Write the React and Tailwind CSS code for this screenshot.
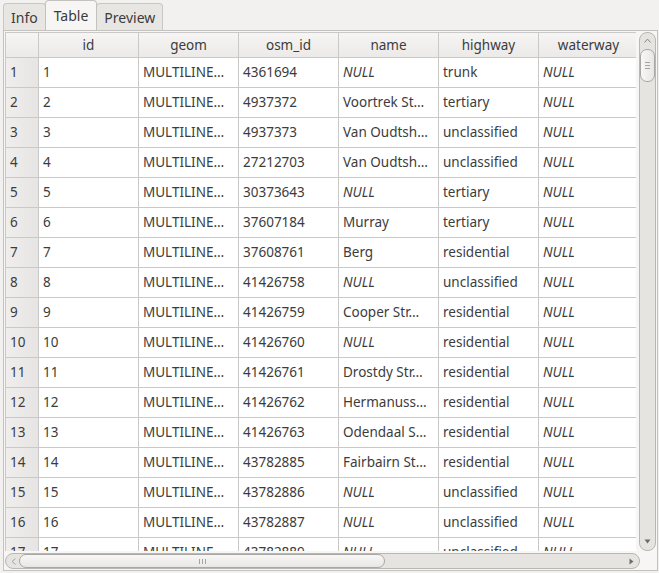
import React from 'react'

const rows = [
  ['1', '4361694', null, 'trunk'],
  ['2', '4937372', 'Voortrek St…', 'tertiary'],
  ['3', '4937373', 'Van Oudtsh…', 'unclassified'],
  ['4', '27212703', 'Van Oudtsh…', 'unclassified'],
  ['5', '30373643', null, 'tertiary'],
  ['6', '37607184', 'Murray', 'tertiary'],
  ['7', '37608761', 'Berg', 'residential'],
  ['8', '41426758', null, 'unclassified'],
  ['9', '41426759', 'Cooper Str…', 'residential'],
  ['10', '41426760', null, 'residential'],
  ['11', '41426761', 'Drostdy Str…', 'residential'],
  ['12', '41426762', 'Hermanuss…', 'residential'],
  ['13', '41426763', 'Odendaal S…', 'residential'],
  ['14', '43782885', 'Fairbairn St…', 'residential'],
  ['15', '43782886', null, 'unclassified'],
  ['16', '43782887', null, 'unclassified'],
  ['17', '43782889', null, 'unclassified'],
]

const headers = ['id', 'geom', 'osm_id', 'name', 'highway', 'waterway']

function Cell({ children, italic }) {
  return (
    <div
      className={
        'w-[100px] shrink-0 h-full border-r border-[#c9c9c9] pl-[4px] flex items-center whitespace-nowrap overflow-hidden ' +
        (italic ? 'italic' : '')
      }
    >
      {children}
    </div>
  )
}

function Tab({ label, active }) {
  return (
    <div
      className={
        active
          ? 'h-[30px] px-[8px] flex items-center border border-b-0 border-[#c4c2bf] rounded-t-[4px] bg-[#f7f6f5] -mx-px z-10'
          : 'h-[27px] px-[7px] flex items-center border border-b-0 border-[#c9c7c4] rounded-t-[4px] bg-[#e8e6e3]'
      }
    >
      {label}
    </div>
  )
}

export default function App() {
  return (
    <div
      className="w-[659px] h-[573px] bg-[#f2f1f0] text-[#3c3c3c] text-[13.5px] overflow-hidden"
      style={{ fontFamily: '"Noto Sans", "DejaVu Sans", sans-serif' }}
    >
      <div className="flex items-end h-[30px] pl-[3px] text-[14px]">
        <Tab label="Info" />
        <Tab label="Table" active />
        <Tab label="Preview" />
      </div>
      <div className="ml-[3px] mr-[1px] h-[541px] border border-[#c4c2bf] bg-[#f7f6f5] p-px flex flex-col">
        <div className="flex h-[519px]">
          <div className="w-[634px] overflow-hidden bg-white border-l border-t border-[#c9c9c9]">
            <div className="flex h-[25px] border-b border-[#c9c9c9] bg-gradient-to-b from-[#f6f5f4] to-[#ebeae9]">
              <div className="w-[33px] shrink-0 border-r border-[#c9c9c9]" />
              {headers.map((h) => (
                <div key={h} className="w-[100px] shrink-0 border-r border-[#c9c9c9] flex items-center justify-center">
                  {h}
                </div>
              ))}
            </div>
            {rows.map((r) => (
              <div key={r[0]} className="flex h-[30px] border-b border-[#c9c9c9]">
                <div className="w-[33px] shrink-0 h-full border-r border-[#c9c9c9] bg-gradient-to-r from-[#efeeed] to-[#e6e5e4] pl-[4px] flex items-center">
                  {r[0]}
                </div>
                <Cell>{r[0]}</Cell>
                <Cell>MULTILINE…</Cell>
                <Cell>{r[1]}</Cell>
                <Cell italic={!r[2]}>{r[2] || 'NULL'}</Cell>
                <Cell>{r[3]}</Cell>
                <Cell italic>NULL</Cell>
              </div>
            ))}
          </div>
          <div className="ml-[3px] w-[17px] h-full rounded-[8px] border border-[#b9b7b4] bg-[#e6e4e1] flex flex-col items-center relative">
            <svg width="7" height="5" className="mt-[5px]" viewBox="0 0 7 5">
              <path d="M0.5 4.5 L3.5 1 L6.5 4.5" fill="none" stroke="#8a8886" />
            </svg>
            <div className="mt-[6px] w-[15px] h-[33px] rounded-[7px] border border-[#a9a7a4] bg-gradient-to-r from-[#f8f7f6] to-[#e9e7e5] flex flex-col items-center justify-center gap-[2px]">
              <div className="w-[5px] h-px bg-[#a5a3a0]" />
              <div className="w-[5px] h-px bg-[#a5a3a0]" />
              <div className="w-[5px] h-px bg-[#a5a3a0]" />
            </div>
            <svg width="7" height="5" className="absolute bottom-[6px]" viewBox="0 0 7 5">
              <path d="M0.5 0.5 L6.5 0.5 L3.5 4.5 Z" fill="#6f6d6b" />
            </svg>
          </div>
        </div>
        <div className="mt-[2px] w-[635px] h-[16px] rounded-[8px] border border-[#b9b7b4] bg-[#e6e4e1] flex items-center relative">
          <svg width="5" height="7" className="ml-[5px]" viewBox="0 0 5 7">
            <path d="M4.5 0.5 L1 3.5 L4.5 6.5" fill="none" stroke="#a4a2a0" />
          </svg>
          <div className="ml-[3px] w-[366px] h-[14px] rounded-[7px] border border-[#a9a7a4] bg-gradient-to-b from-[#f8f7f6] to-[#e9e7e5] flex items-center justify-center gap-[2px]">
            <div className="w-px h-[5px] bg-[#a5a3a0]" />
            <div className="w-px h-[5px] bg-[#a5a3a0]" />
            <div className="w-px h-[5px] bg-[#a5a3a0]" />
          </div>
          <svg width="5" height="7" className="absolute right-[5px]" viewBox="0 0 5 7">
            <path d="M0.5 0.5 L4.5 3.5 L0.5 6.5 Z" fill="#6f6d6b" />
          </svg>
        </div>
      </div>
    </div>
  )
}
